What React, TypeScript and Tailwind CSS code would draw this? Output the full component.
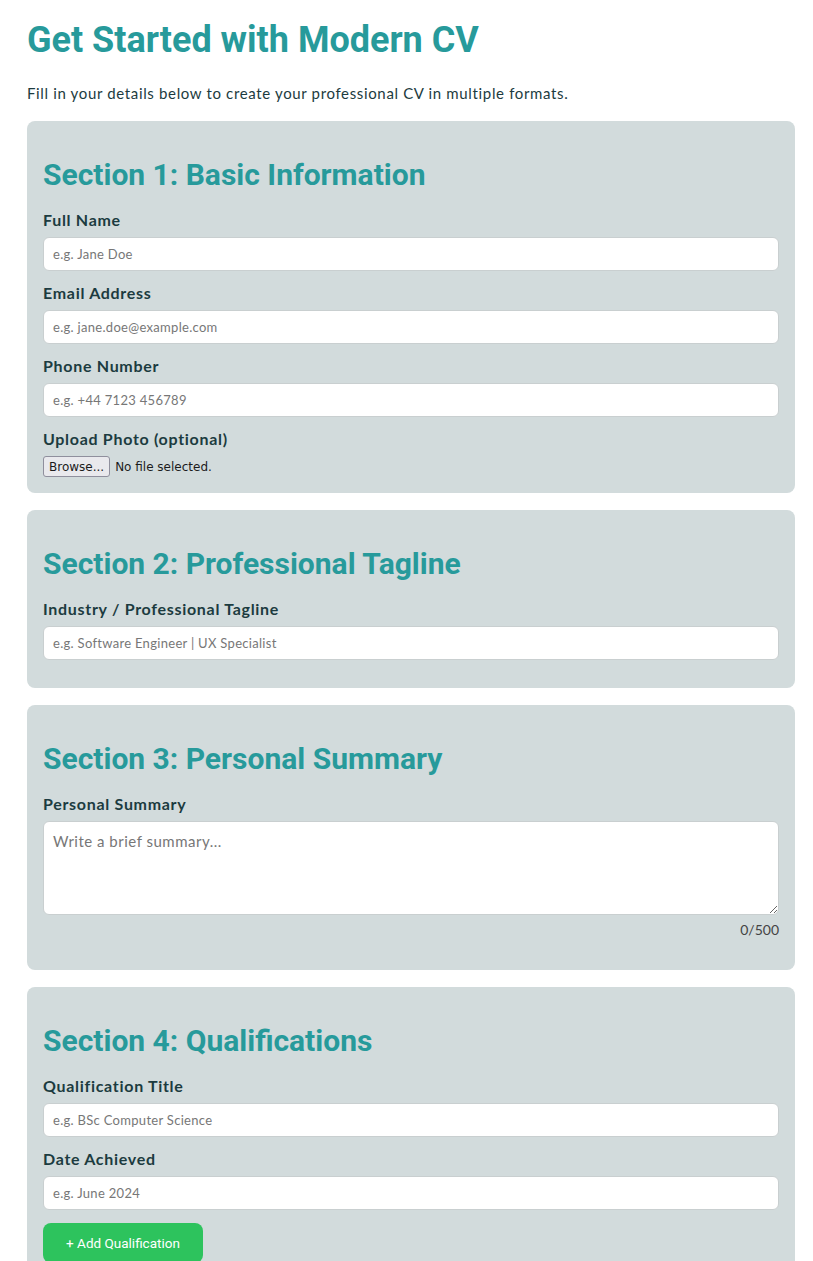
import React from 'react';

const body = "font-['Lato','Noto_Sans',sans-serif]";
const head = "font-['Roboto','Liberation_Sans',sans-serif]";
const labelCls = `block text-[16px] leading-[20px] font-bold tracking-[0.7px] text-[#1c3b40] mb-[7px] ${body}`;

function Field({ label, placeholder }: { label: string; placeholder: string }) {
    return (
        <div>
            <label className={labelCls}>{label}</label>
            <input
                type="text"
                placeholder={placeholder}
                className={`block w-full h-[34px] mb-[12px] px-[9px] bg-white border border-[#c9cfd0] rounded-[6px] text-[13px] tracking-[0.3px] text-[#333] placeholder:text-[#777] outline-none ${body}`}
            />
        </div>
    );
}

function Section({ title, children }: { title: string; children: React.ReactNode }) {
    return (
        <section className="bg-[#d2dbdc] rounded-[8px] px-[16px] pt-[36px] pb-[16px] mb-[17px]">
            <h2 className={`text-[30px] leading-[36px] font-bold text-[#279a9b] mb-[17px] ${head}`}>{title}</h2>
            {children}
        </section>
    );
}

export default function App() {
    return (
        <div className="min-h-screen bg-white pl-[27px] pr-[18px] pt-[18px]">
            <h1 className={`text-[36px] leading-[44px] font-bold text-[#279a9b] ${head}`}>Get Started with Modern CV</h1>
            <p className={`mt-[20px] mb-[17px] text-[15px] leading-[22px] tracking-[0.65px] text-[#1c3b40] ${body}`}>
                Fill in your details below to create your professional CV in multiple formats.
            </p>

            {/* Section 1 */}
            <Section title="Section 1: Basic Information">
                <Field label="Full Name" placeholder="e.g. Jane Doe" />
                <Field label="Email Address" placeholder="e.g. jane.doe@example.com" />
                <Field label="Phone Number" placeholder="e.g. +44 7123 456789" />
                <label className={labelCls}>Upload Photo (optional)</label>
                <div className="flex items-center gap-[5px] h-[21px] font-['DejaVu_Sans',sans-serif] text-[12px] text-[#1c1c1c]">
                    <span className="h-[21px] px-[5px] flex items-center bg-[#e9e9ed] border border-[#8f8f9d] rounded-[3px]">Browse...</span>
                    <span>No file selected.</span>
                </div>
            </Section>

            {/* Section 2 */}
            <Section title="Section 2: Professional Tagline">
                <Field label="Industry / Professional Tagline" placeholder="e.g. Software Engineer | UX Specialist" />
            </Section>

            {/* Section 3 */}
            <Section title="Section 3: Personal Summary">
                <label className={labelCls}>Personal Summary</label>
                <textarea
                    placeholder="Write a brief summary..."
                    className={`block w-full h-[94px] px-[9px] py-[8px] bg-white border border-[#c9cfd0] rounded-[6px] text-[15px] tracking-[0.5px] text-[#333] placeholder:text-[#777] outline-none ${body}`}
                />
                <div className={`text-right text-[14px] leading-[18px] text-[#444] mt-[6px] mb-[15px] ${body}`}>0/500</div>
            </Section>

            {/* Section 4 */}
            <Section title="Section 4: Qualifications">
                <Field label="Qualification Title" placeholder="e.g. BSc Computer Science" />
                <Field label="Date Achieved" placeholder="e.g. June 2024" />
                <button className={`mt-px w-[160px] h-[40px] rounded-[8px] bg-[#2dc35d] text-white text-[13.5px] ${head}`}>
                    + Add Qualification
                </button>
            </Section>
        </div>
    );
}
